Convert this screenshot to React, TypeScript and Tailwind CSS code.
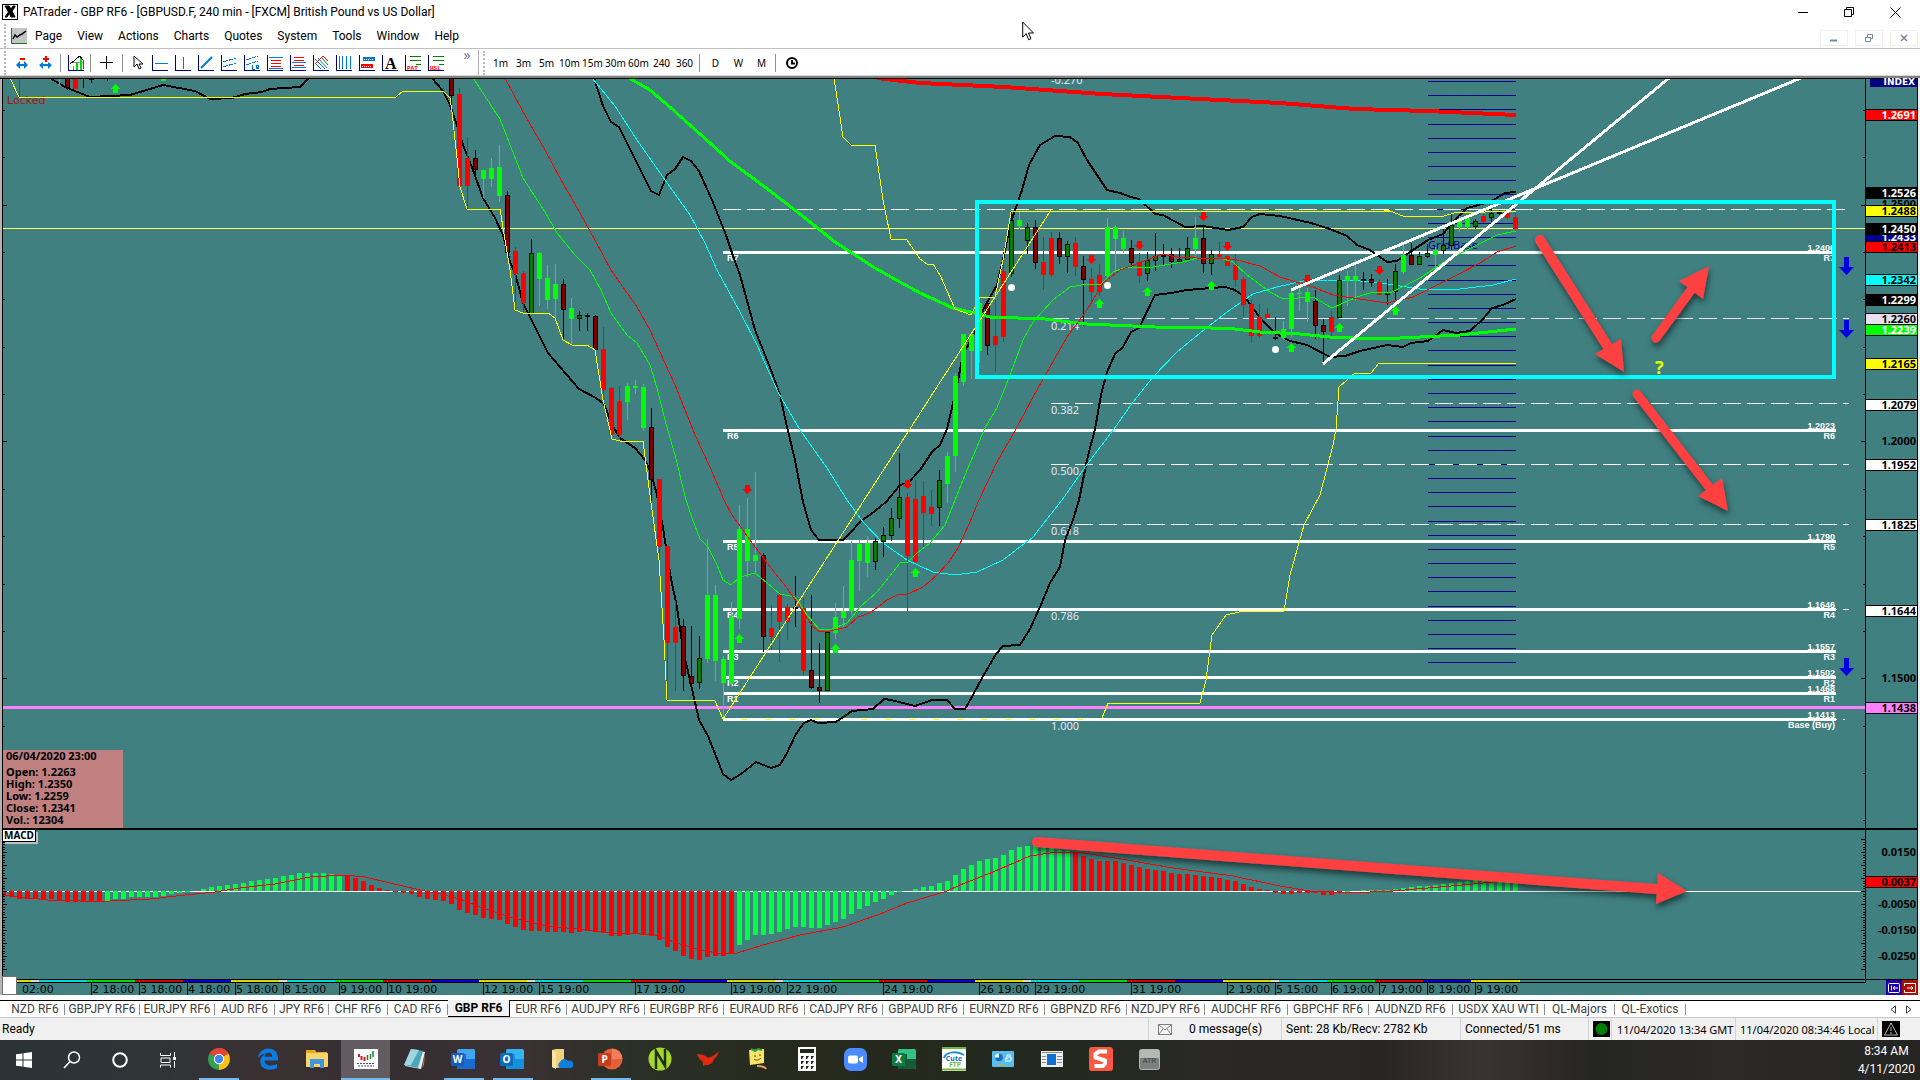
import React from "react";

/* ---------- chart data ---------- */

const PLOT_W = 1866;
const PLOT_TOP = 78;
const PLOT_H = 917;
const barX = (k: number) => 11.5 + 8 * k;

// R / G: bright down and up bars, D / g: dark down and up bars with a black outline
type Candle = [number, number, number, number, number, "R" | "G" | "D" | "g"];

// [bar, high, low, body top, body bottom, kind]
const candles: Candle[] = [
  [1, 78, 97, 78, 79, "R"], [6, 78, 86, 78, 79, "G"], [7, 78, 90, 78, 88, "D"], [8, 78, 89, 78, 89, "R"],
  [9, 78, 88, 78, 79, "D"], [10, 78, 83, 78, 80, "g"], [12, 78, 81, 78, 79, "D"],
  [55, 78, 107, 78, 96, "D"], [56, 88, 186, 94, 186, "R"], [57, 137, 209, 158, 186, "R"], [58, 150, 180, 158, 170, "D"],
  [59, 170, 198, 170, 179, "G"], [60, 158, 187, 168, 179, "G"], [61, 145, 202, 167, 196, "G"], [62, 191, 254, 195, 253, "D"],
  [63, 247, 310, 251, 274, "R"], [64, 271, 312, 273, 303, "R"], [65, 239, 314, 253, 314, "g"], [66, 252, 306, 253, 279, "G"],
  [67, 265, 309, 278, 300, "G"], [68, 264, 318, 284, 299, "G"], [69, 279, 339, 284, 310, "D"], [70, 298, 344, 308, 319, "G"],
  [71, 311, 331, 315, 319, "g"], [72, 313, 331, 315, 317, "D"], [73, 315, 350, 316, 350, "D"], [74, 327, 400, 349, 390, "R"],
  [75, 387, 436, 388, 435, "R"], [76, 386, 439, 401, 435, "R"], [77, 383, 420, 386, 402, "G"], [78, 380, 394, 386, 388, "G"],
  [79, 384, 431, 387, 428, "G"], [80, 408, 501, 427, 480, "D"], [81, 479, 561, 479, 547, "R"], [82, 546, 700, 546, 643, "R"],
  [83, 601, 691, 627, 643, "R"], [84, 619, 691, 626, 676, "D"], [85, 626, 684, 676, 684, "D"], [86, 636, 689, 658, 683, "g"],
  [87, 539, 663, 595, 659, "G"], [88, 585, 681, 595, 661, "G"], [89, 656, 719, 659, 683, "G"], [90, 602, 687, 617, 683, "G"],
  [91, 505, 629, 529, 619, "G"], [92, 498, 577, 529, 561, "G"], [93, 472, 574, 555, 561, "G"], [94, 553, 652, 555, 637, "D"],
  [95, 605, 650, 628, 637, "R"], [96, 592, 662, 595, 622, "R"], [97, 604, 640, 607, 622, "R"], [98, 576, 627, 607, 609, "D"],
  [99, 598, 675, 608, 671, "R"], [100, 595, 689, 670, 688, "D"], [101, 643, 703, 687, 691, "D"], [102, 632, 691, 632, 691, "g"],
  [103, 603, 639, 617, 633, "G"], [104, 586, 628, 611, 618, "G"], [105, 541, 614, 560, 611, "G"], [106, 540, 591, 544, 561, "G"],
  [107, 536, 577, 543, 563, "G"], [108, 538, 570, 541, 562, "g"], [109, 527, 557, 535, 542, "g"], [110, 508, 541, 518, 536, "g"],
  [111, 453, 528, 497, 519, "g"], [112, 493, 611, 497, 556, "R"], [113, 480, 563, 499, 562, "R"], [114, 481, 547, 496, 513, "R"],
  [115, 490, 526, 507, 514, "R"], [116, 470, 526, 480, 508, "g"], [117, 452, 503, 456, 484, "G"], [118, 373, 472, 376, 456, "G"],
  [119, 334, 386, 334, 382, "G"], [120, 334, 379, 334, 351, "G"], [121, 297, 363, 303, 351, "G"], [122, 300, 355, 303, 346, "D"],
  [123, 300, 372, 336, 345, "R"], [124, 260, 342, 271, 337, "R"], [125, 212, 277, 220, 274, "g"], [126, 212, 229, 220, 226, "G"],
  [127, 223, 254, 227, 241, "g"], [128, 220, 269, 227, 263, "D"], [129, 237, 290, 262, 275, "R"], [130, 232, 277, 238, 275, "R"],
  [131, 232, 264, 238, 257, "D"], [132, 241, 273, 244, 257, "g"], [133, 237, 276, 243, 267, "R"], [134, 256, 326, 266, 280, "D"],
  [135, 268, 304, 279, 292, "R"], [136, 264, 296, 275, 292, "R"], [137, 218, 277, 227, 276, "G"], [138, 225, 271, 227, 239, "G"],
  [139, 231, 253, 238, 249, "G"], [140, 240, 268, 248, 263, "D"], [141, 253, 283, 262, 276, "R"], [142, 252, 281, 260, 274, "g"],
  [143, 233, 271, 256, 261, "g"], [144, 244, 266, 255, 257, "D"], [145, 248, 268, 254, 262, "D"], [146, 248, 263, 259, 262, "g"],
  [147, 237, 261, 248, 260, "g"], [148, 217, 257, 238, 249, "G"], [149, 227, 273, 238, 264, "D"], [150, 250, 275, 254, 264, "g"],
  [151, 242, 259, 254, 257, "R"], [152, 255, 266, 256, 266, "R"], [153, 254, 287, 265, 280, "R"], [154, 277, 316, 279, 305, "R"],
  [155, 300, 343, 304, 336, "R"], [156, 304, 338, 317, 336, "R"], [157, 308, 318, 314, 318, "R"], [158, 317, 340, 337, 339, "D"],
  [159, 321, 340, 329, 338, "G"], [160, 289, 337, 293, 329, "G"], [161, 288, 311, 293, 294, "G"], [162, 288, 322, 292, 302, "G"],
  [163, 290, 339, 301, 326, "D"], [164, 319, 362, 325, 332, "D"], [165, 311, 337, 317, 332, "R"], [166, 275, 318, 280, 318, "g"],
  [167, 271, 306, 276, 281, "G"], [168, 259, 301, 276, 281, "G"], [169, 272, 290, 279, 281, "D"], [170, 274, 287, 279, 283, "D"],
  [171, 279, 295, 282, 295, "R"], [172, 279, 305, 292, 295, "g"], [173, 264, 300, 271, 292, "g"], [174, 243, 274, 255, 272, "G"],
  [175, 243, 265, 255, 265, "D"], [176, 252, 265, 256, 265, "g"], [177, 244, 258, 253, 257, "g"], [178, 247, 270, 250, 255, "G"],
  [179, 229, 254, 245, 251, "g"], [180, 213, 250, 225, 246, "g"], [181, 216, 232, 221, 227, "G"], [182, 215, 229, 218, 227, "G"],
  [183, 219, 229, 221, 227, "g"], [184, 214, 223, 216, 222, "R"], [185, 209, 222, 213, 218, "g"], [186, 210, 215, 212, 214, "D"],
  [187, 211, 219, 213, 218, "R"], [188, 213, 229, 217, 229, "R"],
];

const macd = [
  -6, -8, -8, -8, -8, -8, -10, -11, -11, -11, -11, -11, -10, -8, -8, -6, -6, -6, -6, -5, -3, -2, -1, 0, 2, 4, 5, 6, 7, 8, 10, 11,
  12, 13, 15, 16, 18, 18, 18, 18, 17, 16, 16, 13, 10, 6, 3, 1, -1, -2, -3, -6, -8, -9, -10, -13, -19, -22, -24, -27, -28, -29,
  -33, -36, -39, -40, -40, -41, -41, -41, -42, -41, -40, -41, -42, -45, -45, -44, -43, -44, -45, -49, -56, -60, -65, -68, -69,
  -66, -65, -65, -62, -54, -49, -44, -44, -43, -41, -38, -36, -36, -37, -37, -34, -31, -28, -23, -18, -15, -11, -8, -4, -1, 0, 2,
  4, 5, 8, 10, 16, 22, 26, 30, 32, 33, 36, 41, 44, 45, 45, 45, 43, 41, 40, 39, 35, 32, 30, 30, 30, 28, 26, 24, 22, 21, 20, 18,
  17, 17, 16, 15, 14, 13, 11, 10, 7, 4, 2, 1, -2, -3, -3, -2, -2, -2, -4, -4, -2, -1, 0, 1, 1, 1, 1, 2, 3, 4, 5, 5, 6, 7, 8, 9,
  10, 11, 11, 10, 9, 9, 8,
];
const macdIsGreen = (k: number) => (k >= 12 && k <= 41) || (k >= 91 && k <= 132) || k >= 167;

const signal =
  "3,895 20,897 48,900 80,901 110,901 150,899 185,895 215,892 240,888 275,884 310,877 345,875 365,877 390,883 420,890 440,894 460,899 480,907 513,918 547,926 587,930 610,933 640,934 655,935 677,943 700,950 723,954 737,953 763,945 800,935 843,927 880,914 907,903 947,891 960,885 993,872 1030,856 1057,852 1077,852 1127,860 1173,868 1233,876 1280,886 1310,891 1347,893 1393,891 1440,887 1463,885 1493,882 1515,880";

const yellowLow =
  "10,78 19,97 396,97 403,91 443,91 450,98 452,112 457,158 460,187 467,209 500,209 505,240 510,270 515,310 523,313 548,313 555,318 563,340 572,345 587,345 595,350 603,400 612,439 620,441 643,441 648,480 652,510 659,560 664,640 667,700 715,701 723,719";
const yellowZig = "723,719 1051,210";
const yellowHigh =
  "834,78 843,137 851,145 875,145 883,200 891,239 907,240 920,259 927,264 933,264 940,275 955,309 971,315 980,297 995,297 1003,260 1011,212 1390,211 1403,216 1444,216 1454,213 1516,211";
const yellowRight =
  "1102,718 1108,703 1200,703 1206,680 1212,635 1226,615 1239,612 1284,611 1290,575 1304,525 1320,495 1333,445 1336,429 1339,387 1355,373 1371,373 1379,363 1516,363";
const blackEarly =
  "50,78 65,87 90,97 130,95 150,89 163,85 195,91 210,99 232,98 245,94 262,92 270,89 300,87 308,79";
const blackLow =
  "432,78 443,91 450,105 457,125 463,145 473,170 483,198 495,218 503,235 510,262 515,273 523,303 531,319 548,353 560,367 579,389 596,398 604,404 612,425 620,438 635,448 645,460 651,473 657,495 663,528 671,579 677,607 683,650 690,680 699,720 708,736 723,774 731,780 741,774 756,762 771,768 780,765 787,753 796,734 804,723 811,720 818,723 836,722 852,711 873,709 884,699 891,700 903,703 915,706 932,700 947,700 955,709 965,709 973,695 982,678 996,654 1003,646 1020,645 1030,629 1040,607 1050,583 1060,567 1065,540 1073,520 1079,500 1087,460 1095,429 1101,395 1107,372 1115,354 1123,347 1131,332 1139,328 1155,295 1171,293 1187,290 1211,288 1225,287 1235,290 1245,297 1260,318 1275,333 1290,341 1307,345 1330,357 1345,356 1360,351 1387,345 1403,347 1411,343 1428,341 1443,330 1456,333 1470,331 1483,319 1492,308 1503,305 1516,299";
const blackHigh =
  "594,78 603,106 611,122 619,127 633,155 651,191 659,195 667,175 675,169 683,157 691,161 699,171 712,200 720,220 726,235 733,256 740,275 755,330 765,355 771,370 780,395 787,427 795,460 803,502 811,530 819,540 843,540 850,533 860,522 875,511 886,502 900,485 908,483 920,470 932,452 940,445 947,429 955,395 963,355 975,332 984,308 997,285 1003,260 1010,225 1015,210 1022,190 1029,165 1040,145 1055,136 1070,137 1078,143 1087,160 1097,175 1107,190 1120,193 1131,197 1139,199 1155,214 1163,215 1185,227 1203,226 1228,230 1243,227 1252,217 1260,214 1280,216 1311,223 1330,229 1347,236 1357,245 1370,250 1387,262 1397,261 1413,250 1428,240 1443,234 1453,222 1467,208 1490,202 1505,193 1516,192";
const limeThick =
  "629,78 650,90 671,108 700,134 731,162 765,187 800,214 835,242 875,268 900,282 920,293 953,308 975,313 990,317 1045,319 1087,324 1155,327 1211,328 1235,329 1260,332 1300,334 1330,337 1380,339 1420,337 1460,335 1516,329";
const redThick = "877,78 920,83 1004,87 1102,94 1200,99 1280,103 1355,109 1428,111 1516,115";
const cyanThin =
  "592,78 615,106 637,140 665,180 690,215 705,243 717,270 740,312 757,345 778,392 800,430 827,468 847,500 863,522 883,543 907,560 933,572 955,575 977,572 1003,560 1033,537 1062,500 1088,463 1114,429 1133,402 1153,377 1177,352 1200,333 1227,312 1253,294 1277,287 1303,281 1327,280 1360,281 1380,283 1420,289 1460,289 1493,285 1516,279";
const limeThin =
  "473,78 500,119 523,178 545,212 557,233 575,255 590,270 601,290 611,313 627,335 637,343 650,365 657,388 665,420 675,455 686,500 692,518 700,539 708,547 717,565 723,580 731,585 740,577 755,573 767,583 780,594 795,597 807,615 819,629 832,629 847,623 860,607 877,592 893,572 900,563 908,562 917,553 930,543 945,525 955,500 965,475 985,428 997,408 1010,375 1023,340 1033,322 1053,300 1070,287 1087,284 1100,285 1113,272 1127,267 1153,267 1183,262 1197,258 1220,258 1233,262 1247,275 1270,292 1283,299 1313,297 1332,308 1357,297 1373,292 1390,293 1420,278 1447,260 1473,247 1497,235 1516,231";
const redThin =
  "505,78 522,110 545,150 560,178 580,213 595,240 611,270 637,307 650,330 660,352 675,385 695,435 710,467 724,500 732,515 738,523 750,540 767,563 787,588 800,607 813,627 820,632 830,631 847,627 858,617 870,613 887,600 897,595 908,594 923,587 937,575 948,563 958,548 970,522 979,500 997,462 1016,429 1033,397 1050,367 1067,337 1087,310 1103,283 1120,270 1147,260 1162,254 1177,257 1197,258 1220,258 1237,260 1260,266 1280,277 1293,281 1313,287 1333,295 1353,298 1387,303 1413,297 1433,287 1457,275 1480,263 1497,252 1516,246";

const levels = [
  { y: 252, price: "1.2406", name: "R7" },
  { y: 430, price: "1.2023", name: "R6" },
  { y: 541, price: "1.1790", name: "R5" },
  { y: 609, price: "1.1646", name: "R4" },
  { y: 651, price: "1.1557", name: "R3" },
  { y: 677, price: "1.1502", name: "R2" },
  { y: 693, price: "1.1468", name: "R1" },
  { y: 719, price: "1.1413", name: "Base (Buy)" },
];

const fibs = [
  { y: 79, text: "-0.270" },
  { y: 325, text: "0.214" },
  { y: 409, text: "0.382" },
  { y: 470, text: "0.500" },
  { y: 530, text: "0.618" },
  { y: 615, text: "0.786" },
  { y: 725, text: "1.000" },
];

const dates: [number, string][] = [
  [91, "2 18:00"], [139, "3 18:00"], [187, "4 18:00"], [235, "5 18:00"], [283, "8 15:00"], [339, "9 19:00"], [387, "10 19:00"],
  [483, "12 19:00"], [539, "15 19:00"], [635, "17 19:00"], [731, "19 19:00"], [787, "22 19:00"], [883, "24 19:00"],
  [979, "26 19:00"], [1035, "29 19:00"], [1131, "31 19:00"], [1227, "2 19:00"], [1275, "5 15:00"], [1331, "6 19:00"],
  [1379, "7 19:00"], [1427, "8 19:00"], [1475, "9 19:00"],
];

const week: [number, string][] = [
  [48, "#dcd800"], [8, "#d8d8d8"], [48, "#00d8d8"], [48, "#00d800"], [48, "#d80000"], [48, "#0000d8"],
];
const strip: { x: number; w: number; c: string }[] = [];
for (let x = -17, i = 0; x < 1520; i++) {
  const [w, c] = week[i % week.length];
  const from = Math.max(x, 16);
  const to = Math.min(x + w, 1520);
  if (to > from) strip.push({ x: from, w: to - from, c });
  x += w;
}

const axisLabels: { y: number; text: string; cls: string }[] = [
  { y: 204, text: "1.2500", cls: "border-transparent text-black" },
  { y: 441, text: "1.2000", cls: "border-transparent text-black" },
  { y: 678, text: "1.1500", cls: "border-transparent text-black" },
  { y: 115, text: "1.2691", cls: "border-black bg-[#ff0000] text-white" },
  { y: 193, text: "1.2526", cls: "border-black bg-black text-white" },
  { y: 211, text: "1.2488", cls: "border-black bg-[#ffff00] text-black" },
  { y: 237, text: "1.2433", cls: "border-[#000090] bg-[#000090] text-white" },
  { y: 229, text: "1.2450", cls: "border-black bg-black text-white" },
  { y: 247, text: "1.2413", cls: "border-black bg-[#ff0000] text-black" },
  { y: 280, text: "1.2342", cls: "border-black bg-[#00ffff] text-black" },
  { y: 300, text: "1.2299", cls: "border-black bg-black text-white" },
  { y: 319, text: "1.2260", cls: "border-black bg-[#e6e0f0] text-black" },
  { y: 330, text: "1.2239", cls: "border-black bg-[#00ff00] text-white" },
  { y: 364, text: "1.2165", cls: "border-black bg-[#ffff00] text-black" },
  { y: 405, text: "1.2079", cls: "border-black bg-white text-black" },
  { y: 465, text: "1.1952", cls: "border-black bg-white text-black" },
  { y: 525, text: "1.1825", cls: "border-black bg-white text-black" },
  { y: 611, text: "1.1644", cls: "border-black bg-white text-black" },
  { y: 708, text: "1.1438", cls: "border-black bg-[#ff80ff] text-black" },
  { y: 852, text: "0.0150", cls: "border-transparent text-black" },
  { y: 882, text: "0.0037", cls: "border-black bg-[#ff0000] text-black" },
  { y: 904, text: "-0.0050", cls: "border-transparent text-black" },
  { y: 930, text: "-0.0150", cls: "border-transparent text-black" },
  { y: 956, text: "-0.0250", cls: "border-transparent text-black" },
];

const range = (n: number) => Array.from({ length: n }, (_, i) => i);
const leftPct = (x: number) => `${(x / PLOT_W) * 100}%`;
const topPct = (y: number) => `${((y - PLOT_TOP) / PLOT_H) * 100}%`;

/* ---------- chart parts ---------- */

function Note({ x, y, className, children }: { x: number; y: number; className: string; children: React.ReactNode }) {
  return (
    <span className={`absolute -translate-y-1/2 whitespace-nowrap leading-none ${className}`} style={{ left: leftPct(x), top: topPct(y) }}>
      {children}
    </span>
  );
}

function Layer({ children }: { children: React.ReactNode }) {
  return (
    <svg className="absolute inset-0 h-full w-full" viewBox={`0 ${PLOT_TOP} ${PLOT_W} ${PLOT_H}`} preserveAspectRatio="none" aria-hidden="true">
      {children}
    </svg>
  );
}

function CandleBar({ c }: { c: Candle }) {
  const [k, hi, lo, t, b, kind] = c;
  const x = barX(k);
  const outlined = kind === "D" || kind === "g";
  const color = { R: "#ff0000", G: "#00ff00", D: "#800000", g: "#008000" }[kind];
  return (
    <g shapeRendering="crispEdges">
      <rect x={x - 0.5} y={hi} width={1} height={Math.max(lo - hi, 1)} fill={outlined ? "#000" : color} />
      <rect x={x - 2.5} y={t} width={5} height={b - t} fill={outlined ? "#000" : color} />
      {outlined && b - t > 2 && <rect x={x - 1.5} y={t + 1} width={3} height={b - t - 2} fill={color} />}
    </g>
  );
}

function Marker({ x, y, dir, fill = dir === "up" ? "#00ff00" : "#ff0000" }: { x: number; y: number; dir: "up" | "down"; fill?: string }) {
  const d = dir === "up" ? "M0 0L5 5H2.5V9H-2.5V5H-5Z" : "M-2.5 0H2.5V4H5L0 9L-5 4H-2.5Z";
  return <path d={d} transform={`translate(${x} ${y})`} fill={fill} />;
}

function BigArrow({ x1, y1, x2, y2, head, w = 10 }: { x1: number; y1: number; x2: number; y2: number; head: string; w?: number }) {
  return (
    <g fill="#ff4040" stroke="none" filter="url(#arrowShadow)">
      <line x1={x1} y1={y1} x2={x2} y2={y2} stroke="#ff4040" strokeWidth={w} strokeLinecap="round" />
      <polygon points={head} />
    </g>
  );
}

function Plot() {
  return (
    <div className="relative min-w-0 flex-1 overflow-hidden">
      <Layer>
        <g shapeRendering="crispEdges">
          {range(42).map((i) => (
            <rect key={i} x={1428} y={Math.round(81 + i * 14.18)} width={88} height={1} fill="#000090" />
          ))}
          <g stroke="#ffffff" strokeWidth={1} strokeDasharray="18 6">
            <line x1={723} y1={209.5} x2={1845} y2={209.5} />
            <line x1={1051} y1={318.5} x2={1849} y2={318.5} stroke="#e6e0f0" />
            <line x1={1051} y1={403.5} x2={1849} y2={403.5} />
            <line x1={1051} y1={464.5} x2={1849} y2={464.5} />
            <line x1={1051} y1={524.5} x2={1849} y2={524.5} />
            <line x1={1051} y1={609.5} x2={1849} y2={609.5} />
            <line x1={1051} y1={719.5} x2={1845} y2={719.5} />
          </g>
          {levels.map((l) => (
            <rect key={l.name} x={723} y={l.y - 1} width={1113} height={3} fill="#fff" />
          ))}
          <line x1={741} y1={719.5} x2={1102} y2={719.5} stroke="#ffff00" strokeDasharray="6 18" />
          <rect x={3} y={706} width={1863} height={3} fill="#ff80ff" />
          <rect x={3} y={228} width={1863} height={1} fill="#ffff60" />
        </g>
      </Layer>

      <div className="font-['Liberation_Sans'] text-[9px] font-bold text-white">
        {levels.map((l) => (
          <React.Fragment key={l.name}>
            <Note x={1835} y={l.y - 4} className="-translate-x-full">{l.price}</Note>
            <Note x={1835} y={l.y + 6} className="-translate-x-full">{l.name}</Note>
            {l.name !== "Base (Buy)" && <Note x={727} y={l.y + 6} className="">{l.name}</Note>}
          </React.Fragment>
        ))}
      </div>
      <div className="text-[11px] text-[#e4e4f0]">
        {fibs.map((f) => (
          <Note key={f.text} x={1051} y={f.y} className="">{f.text}</Note>
        ))}
        <Note x={1428} y={244} className="text-[#000090]">Grid Base</Note>
      </div>
      <Note x={7} y={100} className="font-['DejaVu_Sans'] text-[11px] text-[#a81414]">Locked</Note>

      <Layer>
        <defs>
          <filter id="arrowShadow" x="-20%" y="-40%" width="140%" height="190%">
            <feDropShadow dx="1" dy="4" stdDeviation="3" floodColor="#000" floodOpacity="0.55" />
          </filter>
        </defs>
        <g fill="none" strokeWidth={1} shapeRendering="crispEdges">
          <g strokeWidth={2} stroke="#000">
            <polyline points={blackEarly} />
            <polyline points={blackLow} />
            <polyline points={blackHigh} />
          </g>
          <polyline points={cyanThin} stroke="#00ffff" />
          <polyline points={redThick} stroke="#ff0000" strokeWidth={4} />
        </g>
        {candles.map((c) => (
          <CandleBar key={c[0]} c={c} />
        ))}
        <g fill="none" strokeWidth={1} shapeRendering="crispEdges">
          <polyline points={limeThick} stroke="#00ff00" strokeWidth={3} />
          <polyline points={limeThin} stroke="#00ff00" />
          <polyline points={redThin} stroke="#ff0000" />
          <g stroke="#ffff00">
            <polyline points={yellowLow} />
            <polyline points={yellowZig} />
            <polyline points={yellowHigh} />
            <polyline points={yellowRight} />
          </g>
        </g>
        {[[115.5, 84], [739.5, 634], [835.5, 644], [915.5, 568], [1099.5, 299], [1147.5, 287], [1211.5, 281], [1291.5, 343], [1339.5, 323], [1395.5, 306]].map(
          ([x, y]) => (
            <Marker key={x} x={x} y={y} dir="up" />
          ),
        )}
        {[[747.5, 485], [907.5, 480], [1091.5, 255], [1139.5, 241], [1203.5, 212], [1227.5, 242], [1307.5, 275], [1379.5, 266]].map(([x, y]) => (
          <Marker key={x} x={x} y={y} dir="down" />
        ))}
        <rect x={161} y={78} width={5} height={3} fill="#00ff00" />
        <g fill="#fff">
          <circle cx={1011.5} cy={287.5} r={3.5} />
          <circle cx={1107.5} cy={285.5} r={3.5} />
          <circle cx={1275.5} cy={349.5} r={3.5} />
        </g>
        <g stroke="#fff" strokeWidth={3} fill="none" shapeRendering="crispEdges">
          <line x1={1291} y1={290} x2={1801} y2={78} />
          <line x1={1323} y1={364} x2={1669} y2={78} />
          <rect x={977} y={202} width={857} height={175} stroke="#00ffff" strokeWidth={4} />
        </g>
        {[257, 320, 658].map((y) => (
          <path key={y} d={`M1844 ${y}h5v10h5l-7.500 8l-7.500 -8h5z`} fill="#0000e0" />
        ))}

        {/* MACD pane */}
        <g shapeRendering="crispEdges">
          <rect x={3} y={891} width={1862} height={1} fill="#fff" />
          <rect x={3} y={891} width={3} height={4} fill="#ff0000" />
          {macd.map((v, k) =>
            v === 0 ? null : (
              <rect key={k} x={barX(k) - 2.5} y={v > 0 ? 891 - v : 891} width={5} height={Math.abs(v)} fill={macdIsGreen(k) ? "#00ff40" : "#ff0000"} />
            ),
          )}
          <polyline points={signal} fill="none" stroke="#ff0000" />
          {/* frame, ticks and week strip */}
          <rect x={0} y={78} width={2} height={917} fill="#b4b4b4" />
          <rect x={2} y={78} width={1} height={917} fill="#000" />
          <rect x={0} y={78} width={1866} height={1} fill="#000" />
          <rect x={2} y={828} width={1864} height={2} fill="#000" />
          <rect x={2} y={979} width={1864} height={1} fill="#000" />
          {strip.map((s) => (
            <rect key={s.x} x={s.x} y={980} width={s.w} height={2} fill={s.c} />
          ))}
          <rect x={2} y={982} width={1864} height={1} fill="#000" />
          <rect x={1865} y={78} width={1} height={905} fill="#000" />
          {range(16).map((i) => {
            const y = Math.round(110 + i * 47.35);
            const w = i % 5 === 2 ? 4 : 2;
            return (
              <g key={i}>
                <rect x={3} y={y} width={w} height={1} />
                <rect x={1865 - w} y={y} width={w} height={1} />
              </g>
            );
          })}
          {range(51).map((i) => {
            const y = Math.round(839 + i * 2.6);
            const w = i % 5 === 0 ? 4 : 2;
            return (
              <g key={i}>
                <rect x={3} y={y} width={w} height={1} />
                <rect x={1865 - w} y={y} width={w} height={1} />
              </g>
            );
          })}
          {dates.map(([x]) => (
            <rect key={x} x={x} y={983} width={1} height={12} />
          ))}
          <rect x={2} y={976} width={15} height={19} fill="#707070" />
          <rect x={3} y={977} width={13} height={17} fill="#fff" />
        </g>

        <BigArrow x1={1540} y1={240} x2={1608} y2={347} head="1624,372 1595,354 1621,339" />
        <BigArrow x1={1656} y1={338} x2={1691} y2={290} head="1709,266 1679,281 1703,299" w={9} />
        <BigArrow x1={1637} y1={394} x2={1709} y2={487} head="1728,511 1698,496 1722,478" w={9} />
        <BigArrow x1={1037} y1={842} x2={1656} y2={889} head="1687,891 1658,873 1656,904" />
      </Layer>

      <Note x={1655} y={367} className="text-[18px] font-bold text-[#e0ff00]">?</Note>
      <Note x={22} y={989} className="font-['DejaVu_Sans'] text-[11px]">02:00</Note>
      {dates.map(([x, t]) => (
        <Note key={x} x={x + 1} y={989} className="font-['DejaVu_Sans'] text-[11px]">{t}</Note>
      ))}

      <dl className="absolute left-[3px] h-[78px] w-[120px] bg-[#c08080] pl-[3px] text-[11px] font-bold leading-3" style={{ top: topPct(750) }}>
        <dt className="pb-1">06/04/2020 23:00</dt>
        <dd>Open: 1.2263</dd>
        <dd>High: 1.2350</dd>
        <dd>Low: 1.2259</dd>
        <dd>Close: 1.2341</dd>
        <dd>Vol.: 12304</dd>
      </dl>
      <span
        className="absolute left-[3px] border-r border-b border-black bg-white px-px text-[10px] font-bold leading-[11px] shadow-[2px_2px_0_#c0c0c0]"
        style={{ top: topPct(830) }}
      >
        MACD
      </span>
    </div>
  );
}

function PriceAxis() {
  return (
    <div className="relative w-[54px] text-[11px] font-bold">
      <div className="absolute inset-x-0 top-0 h-px bg-black" />
      <div className="absolute inset-y-0 right-0 w-[2px] bg-[#f0f0f0]" />
      <div className="absolute top-0 right-[2px] bottom-4 w-px bg-black" />
      <div className="absolute inset-x-0 mr-[2px] h-[2px] bg-black" style={{ top: topPct(828) }} />
      <div className="absolute inset-x-0 mr-[2px] h-px bg-black" style={{ top: topPct(979) }} />
      <span className="absolute top-px right-[3px] h-2 w-[47px] bg-[#000080] pr-[2px] text-right font-['DejaVu_Sans'] text-[9px] leading-[7px] text-white">INDEX</span>
      {axisLabels.map((l) => (
        <span
          key={l.text}
          className={`absolute right-[3px] left-0 h-3 -translate-y-1/2 border-y pr-px text-right leading-[10px] ${l.cls}`}
          style={{ top: topPct(l.y) }}
        >
          {l.text}
        </span>
      ))}
      <div className="absolute right-[2px] bottom-0 flex">
        <button aria-label="Compress" className="flex h-[15px] w-4 items-center justify-center bg-[#2000a8]">
          <svg width="12" height="10" viewBox="0 0 12 10" fill="none" stroke="#fff"><rect x=".5" y=".5" width="11" height="9" rx="1" /><path d="M3.500 2.500v5M10 5H5.500M7 3L5 5l2 2" /></svg>
        </button>
        <button aria-label="Expand" className="flex h-[15px] w-4 items-center justify-center bg-[#a81000]">
          <svg width="12" height="10" viewBox="0 0 12 10" fill="none" stroke="#fff"><path d="M.5 3V.5h11v9H.5V7M3 5h6M7 3l2 2-2 2" /></svg>
        </button>
      </div>
    </div>
  );
}

/* ---------- toolbar ---------- */

function ToolIcon({ children, frame = true }: { children?: React.ReactNode; frame?: boolean }) {
  return (
    <svg width="17" height="16" viewBox="0 0 17 16" fill="none" shapeRendering="crispEdges">
      {frame && <path d="M.5 0v15.500H16" stroke="#000080" />}
      {children}
    </svg>
  );
}

const B = "#0078d8";
const drawTools: [string, React.ReactNode][] = [
  ["Horizontal line", <path key="a" d="M3 8.500h13" stroke={B} />],
  ["Vertical line", <path key="a" d="M8.500 2v12" stroke={B} />],
  ["Trend line", <path key="a" d="M3 13L14 2" stroke={B} strokeWidth="2" shapeRendering="auto" />],
  ["Channel", <path key="a" d="M2 7l13-4M2 12l13-4" stroke={B} strokeDasharray="5 1" />],
  ["Linear regression", <g key="a"><path d="M2 5l12-4M2 10l12-4" stroke={B} strokeDasharray="5 1" /><path d="M8.500 10v4h2.500M12.500 14V10.500h2v2h-2l3 2" stroke={B} /></g>],
  ["Retracement", <g key="a"><path d="M2 2.500h14M2 13.500h14" stroke={B} /><path d="M4 5.500h10M4 8.500h10M4 11.500h10" stroke="red" /></g>],
  ["Extension", <g key="a"><path d="M2 7.500h14M2 12.500h14" stroke={B} /><path d="M4 2.500h10M4 5.500h10M4 10.500h10" stroke="red" /></g>],
  ["Pitchfork", <g key="a" shapeRendering="auto"><path d="M2 4l10 10M5 3l9 10M2 8l6 6" stroke={B} /><path d="M2 9l8-8 5 5" stroke="red" /><path d="M9 3l6 7" stroke="green" /></g>],
  ["Time zones", <path key="a" d="M3.500 1v13M6.500 1v13M10.500 1v13M14.500 1v13" stroke={B} />],
  ["Ranges", <g key="a"><rect x="4" y="2" width="12" height="4" fill={B} /><path d="M5 4.500h10" stroke="#fff" strokeDasharray="1 1" /><rect x="2" y="9" width="12" height="4" fill="red" /><path d="M3 11.500h10" stroke="#fff" strokeDasharray="1 1" /></g>],
  ["Text", <text key="a" x="3" y="14" fontSize="16" fontWeight="bold" fontFamily="Liberation Serif" fill="#000">A</text>],
  ["PAT levels", <g key="a"><path d="M5 1.500h11M5 5.500h11M11 9.500h5" stroke="green" /><text x="2" y="15" fontSize="6" fontWeight="bold" fontFamily="Liberation Mono" fill="red">PAT</text></g>],
  ["HSL levels", <g key="a"><path d="M5 1.500h11M5 5.500h11M11 9.500h5" stroke="green" /><text x="2" y="15" fontSize="6" fontWeight="bold" fontFamily="Liberation Mono" fill="red">HSL</text></g>],
];

const frames = ["1m", "3m", "5m", "10m", "15m", "30m", "60m", "240", "360"];

const Sep = () => <span className="h-[18px] w-px bg-[#909090]" />;
const Grip = () => <span className="ml-1 h-6 w-0 border-l-2 border-dotted border-[#b8b8b8]" />;

function Toolbar() {
  return (
    <div className="flex h-[27px] items-center border-t border-[#c0c0c0] pt-px" role="toolbar" aria-label="Chart tools">
      <Grip />
      <button aria-label="Decrease spacing" className="ml-[8px] w-[23px] pl-px">
        <svg width="15" height="16" viewBox="0 0 15 16"><path d="M5 3h5v2H5z" fill="red" /><path d="M1 10l4-4v3h4V6l4 4-4 4v-3H5v3z" fill={B} /></svg>
      </button>
      <button aria-label="Increase spacing" className="w-[23px] pl-px">
        <svg width="15" height="16" viewBox="0 0 15 16"><path d="M5 3h2V1h2v2h2v2H9v2H7V5H5z" fill="red" /><path d="M1 10l4-3v2h5V7l4 3-4 4v-3H5v3z" fill={B} /></svg>
      </button>
      <Sep />
      <button aria-label="Indicators" className="ml-[7px] w-[22px]">
        <ToolIcon><path d="M2 7.500h13" stroke="#909090" /><path d="M8 8h2v7H8zM5 11h1v4H5zM12 3h2v12h-2z" fill="#00e000" /><path d="M2 9l4-3 3-3 3-2 3 4 1 5" stroke="#000" /><path d="M15.500 5v9" stroke="red" /></ToolIcon>
      </button>
      <Sep />
      <button aria-label="Crosshair" className="ml-[9px] w-[22px]">
        <ToolIcon frame={false}><path d="M6.500 1v13M0 7.500h13" stroke="#000" /></ToolIcon>
      </button>
      <Sep />
      <button aria-label="Pointer" className="ml-[10px] w-[19px]">
        <svg width="11" height="16" viewBox="0 0 11 16"><path d="M1 1v11l3-3 2 5 2-1-2-4h4z" fill="#fff" stroke="#000" /></svg>
      </button>
      {drawTools.map(([label, art]) => (
        <button key={label} aria-label={label} className="w-[23px]">
          <ToolIcon>{art}</ToolIcon>
        </button>
      ))}
      <button aria-label="More" className="ml-2 -mt-4 w-4 text-[14px] leading-3 text-[#7070b0]">»</button>
      <span className="ml-[3px] h-[25px] w-px bg-[#b0b0b0]" />
      <Grip />
      <div className="ml-1 mr-[3px] flex pt-px text-[10px]">
        {frames.map((f) => (
          <button key={f} className="w-[23px] text-center">{f}</button>
        ))}
      </div>
      <Sep />
      <div className="ml-1 mr-[2px] flex pt-px text-[10px]">
        <button className="w-[23px]">D</button>
        <button className="w-[23px]">W</button>
        <button className="w-[23px]">M</button>
      </div>
      <Sep />
      <button aria-label="Session clock" className="ml-2">
        <svg width="16" height="14" viewBox="0 0 16 14" fill="none" stroke="#000" strokeWidth="2"><circle cx="8" cy="7" r="5" /><path d="M8 4v3.500h3" /></svg>
      </button>
    </div>
  );
}

/* ---------- tabs ---------- */

const tabs: [string, number][] = [
  ["NZD RF6", 65], ["GBPJPY RF6", 75], ["EURJPY RF6", 75], ["AUD RF6", 60], ["JPY RF6", 54], ["CHF RF6", 59], ["CAD RF6", 60],
  ["GBP RF6", 62], ["EUR RF6", 57], ["AUDJPY RF6", 78], ["EURGBP RF6", 79], ["EURAUD RF6", 81], ["CADJPY RF6", 78],
  ["GBPAUD RF6", 81], ["EURNZD RF6", 81], ["GBPNZD RF6", 82], ["NZDJPY RF6", 78], ["AUDCHF RF6", 83], ["GBPCHF RF6", 81],
  ["AUDNZD RF6", 84], ["USDX XAU WTI", 92], ["QL-Majors", 70], ["QL-Exotics", 71],
];

function Tabs() {
  return (
    <div className="flex h-[23px] border-b border-[#c8c8c8] bg-white pt-[5px] font-['Roboto'] text-[12px] text-[#404040]">
      <div className="flex min-w-0 flex-1 overflow-hidden" role="tablist">
        {tabs.map(([t, w], i) => {
          const active = t === "GBP RF6";
          return active ? (
            <button key={t} role="tab" aria-selected="true" className="shrink-0 border-r border-b border-black bg-[#f2f2f2] text-center font-bold leading-[15px] whitespace-nowrap text-black" style={{ width: w }}>
              {t}
            </button>
          ) : (
            <button key={t} role="tab" aria-selected="false" className={`flex shrink-0 items-center justify-end border-t border-black leading-[15px] whitespace-nowrap ${i === 0 ? "pl-[6px]" : ""}`} style={{ width: w }}>
              <span className="flex-1 text-center">{t}</span>
              <span className="h-[11px] w-px bg-[#909090]" />
            </button>
          );
        })}
        <div className="flex-1 border-t border-black" />
      </div>
      <div className="flex items-center gap-2 border-t border-black pr-2">
        <button aria-label="Previous tabs"><svg width="7" height="9" viewBox="0 0 7 9" fill="#fff" stroke="#404040"><path d="M5.500 .8v7.400L1 4.500z" /></svg></button>
        <button aria-label="Next tabs"><svg width="7" height="9" viewBox="0 0 7 9" fill="#fff" stroke="#404040"><path d="M1.500 .8v7.400L6 4.500z" /></svg></button>
      </div>
    </div>
  );
}

function StatusBar() {
  return (
    <footer className="flex h-[22px] items-center bg-[#f0f0f0] font-['Roboto'] text-[12px] leading-none whitespace-nowrap text-black">
      <span className="flex-1 pl-[2px]">Ready</span>
      <div className="flex h-full w-[133px] items-center border-l border-[#d4d4d4] pl-[9px]">
        <svg width="14" height="11" viewBox="0 0 14 11" fill="#f4f4f4" stroke="#808080"><rect x=".5" y=".5" width="13" height="10" /><path d="M1 1l6 5 6-5M1 10l4-5M13 10L9 5" fill="none" /></svg>
        <span className="ml-[17px]">0 message(s)</span>
      </div>
      <span className="flex h-full w-[179px] items-center border-l border-[#d4d4d4] pl-1">Sent: 28 Kb/Recv: 2782 Kb</span>
      <span className="flex h-full w-32 items-center border-l border-[#d4d4d4] pl-1">Connected/51 ms</span>
      <span className="flex h-full w-[23px] items-center border-l border-[#d4d4d4] pl-1">
        <svg width="17" height="16" viewBox="0 0 17 16"><rect width="17" height="16" fill="#000" /><circle cx="8.500" cy="8" r="6" fill="#008000" /></svg>
      </span>
      <span className="flex h-full w-[124px] items-center border-l border-[#d4d4d4] pl-[5px] font-['Noto_Sans'] text-[11px]">11/04/2020 13:34 GMT</span>
      <span className="flex h-full w-[142px] items-center border-l border-[#d4d4d4] pl-1 font-['Noto_Sans'] text-[11px]">11/04/2020 08:34:46 Local</span>
      <span className="flex h-full w-[43px] items-center border-l border-[#d4d4d4] pl-1">
        <svg width="18" height="16" viewBox="0 0 18 16"><rect width="18" height="16" fill="#000" /><path d="M9 2l6.500 12h-13zM9 6v4M9 11v2" fill="none" stroke="#b8b8b8" /></svg>
      </span>
    </footer>
  );
}

/* ---------- taskbar ---------- */

const Office = ({ dark, mid, light, letter, round }: { dark: string; mid: string; light: string; letter: string; round?: boolean }) => (
  <svg width="25" height="24" viewBox="0 0 25 24">
    {round ? <circle cx="14" cy="12" r="10.500" fill={light} /> : <rect x="6" y="2" width="18" height="20" rx="1.500" fill={light} />}
    {round ? <path d="M14 12V1.500A10.500 10.500 0 0 1 24.500 12z" fill={mid} opacity=".6" /> : <path d="M6 12h18v8.500a1.500 1.500 0 0 1-1.500 1.500h-15A1.500 1.500 0 0 1 6 20.500zM6 7h9v5H6z" fill={mid} />}
    <rect x="0" y="6" width="13" height="13" rx="1.500" fill={dark} />
    <text x="6.500" y="16" textAnchor="middle" fontSize="10" fontWeight="bold" fontFamily="Noto Sans" fill="#fff">{letter}</text>
  </svg>
);

const apps: { label: string; line?: boolean; active?: boolean; icon: React.ReactNode }[] = [
  {
    label: "Google Chrome", line: true,
    icon: (
      <svg width="22" height="22" viewBox="0 0 22 22">
        <path d="M11 11L1.500 5.500A11 11 0 0 1 20.500 5.500z" fill="#e84435" />
        <path d="M11 11V0A11 11 0 0 1 20.500 5.500H11z" fill="#e84435" />
        <path d="M11 11l9.500-5.500A11 11 0 0 1 11 22z" fill="#fbc116" />
        <path d="M11 11v11A11 11 0 0 1 1.500 5.500z" fill="#34a350" />
        <path d="M11 11l4.800 2.500L11 22z" fill="#fbc116" />
        <circle cx="11" cy="11" r="5.200" fill="#fff" /><circle cx="11" cy="11" r="4.200" fill="#4486f4" />
      </svg>
    ),
  },
  {
    label: "Edge",
    icon: <svg width="22" height="22" viewBox="0 0 22 22"><path d="M1 10C2 3 6.500 .5 11.500 .5c6 0 9.500 4 9.500 9.500v2.500H7.500c.2 3.500 3 5 6 5 2.400 0 4.500-.6 6.500-1.700V20c-2 1.200-4.600 1.700-7.300 1.700C6.500 21.700 3.300 18 3.300 13.700c0-3.700 2-6.700 5.500-8.200C5.500 6 2.500 7.800 1 10zm6.600-1.300h7.600c0-2.700-1.200-4-3.600-4s-3.700 1.700-4 4z" fill="#0a7be0" /></svg>,
  },
  {
    label: "File Explorer",
    icon: <svg width="22" height="20" viewBox="0 0 22 20"><path d="M0 1h9l1.500 2H21v5H0z" fill="#e8a820" /><rect y="4" width="22" height="14" rx="1" fill="#fbd56b" /><path d="M4 10h14v9h-4v-4H8v4H4z" fill="#3f96dc" /></svg>,
  },
  {
    label: "PATrader", line: true, active: true,
    icon: <svg width="24" height="20" viewBox="0 0 24 20"><rect width="24" height="20" fill="#fff" /><path d="M5 5v3M7.500 7v4M10.500 8v4" stroke="#d01818" strokeWidth="2" /><path d="M13.500 6v5M16.500 5v5M19 2v6" stroke="#208030" strokeWidth="1.500" /><path d="M3 14.500h18M4 17h16" stroke="#555" strokeDasharray="2 1" /></svg>,
  },
  {
    label: "Notepad",
    icon: <svg width="23" height="22" viewBox="0 0 23 22"><path d="M8 2l14 2-4 17-16-3z" fill="#e4eef0" /><path d="M8 1l12 2-5 17-14-3z" fill="#4fa3bb" /><path d="M8 1l8 1-8 15-7 0z" fill="#9ed6e2" /><path d="M22 5l-3 15 2-3z" fill="#b08030" /></svg>,
  },
  { label: "Word", line: true, icon: <Office dark="#185abd" mid="#1b6ad0" light="#41a5ee" letter="W" /> },
  { label: "Outlook", line: true, icon: <Office dark="#0f6cbd" mid="#1490df" light="#35b4f2" letter="O" /> },
  {
    label: "OneDrive folder",
    icon: <svg width="22" height="22" viewBox="0 0 22 22"><path d="M1 2l4-1h8v18l-8 1-4-1z" fill="#f0d080" /><path d="M1 2l4 3v16l-4-2z" fill="#fbe4a0" /><path d="M9 20a3.500 3.500 0 0 1 0-6 4.500 4.500 0 0 1 8-1 3.500 3.500 0 0 1 3 7z" fill="#0f80dc" /></svg>,
  },
  { label: "PowerPoint", line: true, icon: <Office dark="#c43e1c" mid="#ff9070" light="#e4603c" letter="P" round /> },
  {
    label: "NinjaTrader",
    icon: <svg width="24" height="24" viewBox="0 0 24 24"><circle cx="12" cy="12" r="11.500" fill="#a6d72c" /><path d="M8 22V4l9 15V2" fill="none" stroke="#203018" strokeWidth="2.500" /></svg>,
  },
  {
    label: "Trading bird",
    icon: <svg width="23" height="16" viewBox="0 0 23 16"><path d="M0 3c4 0 8 1 11 4 3-1 7-3 11-7-1 3-2 6-5 8-1 4-4 6-8 6l-3 1c0-2 0-4-1-5C3 9 1 6 0 3z" fill="#e02a10" /></svg>,
  },
  {
    label: "Sticky notes",
    icon: <svg width="20" height="22" viewBox="0 0 20 22"><path d="M1 2l15-1v14L2 17z" fill="#f8e468" /><path d="M3 1l4 2 3-2 4 1" stroke="#30a040" strokeWidth="2" fill="none" /><path d="M7 7v2M12 6v2M6 11c2 2 5 1 7-1" stroke="#604010" fill="none" /><path d="M9 18c4 0 8 0 9 3" stroke="#e8a060" strokeWidth="2" fill="none" /></svg>,
  },
  {
    label: "Calculator",
    icon: <svg width="18" height="24" viewBox="0 0 18 24"><rect width="18" height="24" fill="#fff" /><rect x="2" y="2" width="14" height="4" fill="#20281c" />{[9, 14, 19].map((y) => [3, 8, 13].map((x) => <path key={`${x}-${y}`} d={`M${x} ${y}h3l-2 3h-1z`} fill="#20281c" />))}</svg>,
  },
  {
    label: "Zoom",
    icon: <svg width="23" height="23" viewBox="0 0 23 23"><rect width="23" height="23" rx="7" fill="#4a8cff" /><rect x="4" y="7.500" width="10" height="8" rx="2" fill="#fff" /><path d="M15 10.500l4-2.500v7l-4-2.500z" fill="#fff" /></svg>,
  },
  { label: "Excel", icon: <Office dark="#107c41" mid="#185c37" light="#33c481" letter="X" /> },
  {
    label: "CuteFTP",
    icon: <svg width="24" height="24" viewBox="0 0 24 24"><rect width="24" height="24" fill="#fff" /><path d="M0 1h24M0 22.500h24" stroke="#70b840" strokeWidth="2" /><path d="M2 11c2-7 14-7 20-3" stroke="#2090d0" strokeWidth="2" fill="none" /><text x="12" y="14" textAnchor="middle" fontSize="7" fontWeight="bold" fontFamily="Noto Sans" fill="#1870b0">Cute</text><text x="13" y="20" textAnchor="middle" fontSize="7" fontWeight="bold" fontFamily="Noto Sans" fill="#70b840">FTP</text></svg>,
  },
  {
    label: "Control Panel",
    icon: <svg width="22" height="16" viewBox="0 0 22 16"><rect width="22" height="16" rx="1" fill="#58bdf0" /><circle cx="7" cy="6.500" r="4" fill="#fff" /><path d="M7 6.500v-4a4 4 0 1 1-4 4z" fill="#1470c0" /><path d="M13 8h2V4h4M13 10h6V6h-3" stroke="#fff" fill="none" /><path d="M5 13.500h8" stroke="#f8a020" /></svg>,
  },
  {
    label: "Task window",
    icon: <svg width="22" height="16" viewBox="0 0 22 16"><rect width="22" height="16" fill="#f0f0f0" /><rect x="6" y="3" width="9" height="11" fill="#1070d8" /><path d="M1 1.500h20M1 5.500h4M1 8.500h4M1 11.500h4M16 5.500h5M16 8.500h5M16 11.500h5" stroke="#808890" /></svg>,
  },
  {
    label: "Snagit",
    icon: <svg width="24" height="24" viewBox="0 0 24 24"><rect width="24" height="24" rx="3" fill="#fa5843" /><path d="M18 4.500H10L6.500 7v3.500l9.500 3v3l-2 2.500H5.500" fill="none" stroke="#fff" strokeWidth="4" strokeLinejoin="round" /></svg>,
  },
  {
    label: "ATR",
    icon: <svg width="21" height="21" viewBox="0 0 21 21"><rect x=".5" y=".5" width="20" height="20" rx="2" fill="#7c8280" stroke="#b0b4b4" /><rect x="1" y="1" width="19" height="8" fill="#b4b8b6" /><text x="10.500" y="13.500" textAnchor="middle" fontSize="7" fontWeight="bold" fontFamily="Liberation Sans" fill="#4c5250">ATR</text></svg>,
  },
];

function Taskbar() {
  return (
    <nav
      aria-label="Taskbar"
      className="flex h-10 bg-[linear-gradient(90deg,#2b3235_0%,#2f3437_8%,#3a3032_14%,#352f32_20%,#3a3134_27%,#2b3027_33%,#26291c_42%,#23291f_55%,#2a2926_63%,#272623_72%,#3c3233_77%,#252521_83%,#2b2a28_90%,#242422_100%)]"
    >
      <button aria-label="Start" className="flex w-12 items-center justify-center">
        <svg width="16" height="16" viewBox="0 0 16 16" fill="#fff"><path d="M0 2.300L6.500 1.400V7.500H0zM7.500 1.200L16 0v7.500H7.500zM0 8.500h6.500v6.100L0 13.700zM7.500 8.500H16V16l-8.500-1.200z" /></svg>
      </button>
      <button aria-label="Search" className="flex w-12 items-center justify-center">
        <svg width="18" height="18" viewBox="0 0 18 18" fill="none" stroke="#fff" strokeWidth="1.500"><circle cx="11" cy="6.500" r="5.500" /><path d="M7 10.500L1 17" /></svg>
      </button>
      <button aria-label="Cortana" className="flex w-12 items-center justify-center">
        <svg width="16" height="16" viewBox="0 0 16 16" fill="none" stroke="#fff" strokeWidth="2"><circle cx="8" cy="8" r="6.800" /></svg>
      </button>
      <button aria-label="Task view" className="flex w-12 items-center justify-center">
        <svg width="17" height="16" viewBox="0 0 17 16" fill="none" stroke="#fff"><path d="M.5 1v2.500h10V1M1 6h9v4.500H1zM.5 15.500V13h10v2.500M14.500 0v5M14.500 9v7" /><rect x="13.500" y="5.500" width="2" height="2" fill="#fff" /></svg>
      </button>
      <div className="ml-[2px] flex">
        {apps.map((a) => (
          <button key={a.label} aria-label={a.label} className={`flex w-[49px] flex-col items-center ${a.active ? "bg-[#625b60]" : ""}`}>
            <span className="flex flex-1 items-center">{a.icon}</span>
            <span className={`h-[2px] ${a.active ? "w-full" : "w-10"} ${a.line ? "bg-[#76b9ed]" : ""}`} />
          </button>
        ))}
      </div>
      <div className="ml-auto mr-[5px] pt-[2px] text-center font-['Roboto'] text-[12px] leading-[18px] text-white">
        <div>8:34 AM</div>
        <div>4/11/2020</div>
      </div>
    </nav>
  );
}

/* ---------- window ---------- */

const menus = ["Page", "View", "Actions", "Charts", "Quotes", "System", "Tools", "Window", "Help"];

export default function App() {
  return (
    <div className="relative flex min-h-screen flex-col overflow-hidden bg-white font-['Noto_Sans',sans-serif] text-black">
      <header className="flex h-6 items-center font-['Roboto'] text-[12px]">
        <svg className="ml-[2px] mr-[5px]" width="16" height="16" viewBox="0 0 16 16"><rect width="16" height="16" fill="#000" /><rect x="1" y="1" width="14" height="14" fill="#fff" /><path d="M3 2h4l2 3 2-3h2v1l-3 4 3 6H9L7.500 9.500 5 13H3l3.500-5z" fill="#000" stroke="#000" /></svg>
        <h1 className="flex-1 whitespace-nowrap">PATrader - GBP RF6 - [GBPUSD.F, 240 min - [FXCM] British Pound vs US Dollar]</h1>
        <div className="mr-[2px] flex">
          <button aria-label="Minimize" className="flex w-[46px] items-center justify-center"><svg width="10" height="10" stroke="#000"><path d="M0 5.500h10" /></svg></button>
          <button aria-label="Restore" className="flex w-[46px] items-center justify-center"><svg width="10" height="10" viewBox="0 0 10 10" fill="none" stroke="#000"><path d="M.5 2.500h7v7h-7zM2.500 2.500v-2h7v7h-2" /></svg></button>
          <button aria-label="Close" className="flex w-[46px] items-center justify-center"><svg width="11" height="11" viewBox="0 0 11 11" stroke="#000"><path d="M.5 .5l10 10M10.500 .5l-10 10" /></svg></button>
        </div>
      </header>

      <div className="flex h-6 items-center">
        <Grip />
        <svg className="mr-2 ml-[5px]" width="16" height="16" viewBox="0 0 16 16"><rect width="16" height="16" fill="#c4c4c4" /><path d="M.5 0v15.500H16" stroke="#207020" fill="none" /><path d="M2 11l2-4 2 2 3-2 2-1 4-3" stroke="#000" strokeWidth="1.500" fill="none" /></svg>
        <nav aria-label="Menu" className="flex flex-1 gap-[15px] font-['Roboto'] text-[12px]">
          {menus.map((m) => (
            <button key={m}>{m}</button>
          ))}
        </nav>
        <div className="mr-[2px] flex gap-[7px] pt-1 text-[#7088a0]">
          <button aria-label="Minimize chart" className="flex h-4 w-7 items-center justify-center border border-[#f0f0f0]"><svg width="8" height="8" stroke="currentColor"><path d="M0 6.500h7" strokeWidth="2" /></svg></button>
          <button aria-label="Restore chart" className="flex h-4 w-7 items-center justify-center border border-[#f0f0f0]"><svg width="8" height="8" viewBox="0 0 8 8" fill="none" stroke="currentColor"><path d="M.5 3.500h5v4h-5zM2.500 3.500v-3h5v4h-2" /></svg></button>
          <button aria-label="Close chart" className="flex h-4 w-7 items-center justify-center border border-[#f0f0f0]"><svg width="8" height="8" viewBox="0 0 8 8" stroke="currentColor" strokeWidth="1.500"><path d="M1 1l6 6M7 1L1 7" /></svg></button>
        </div>
      </div>

      <Toolbar />
      <div className="h-px bg-[#d8d8d8]" />
      <div className="h-[2px] bg-[#808080]" />

      <main className="flex min-h-[600px] flex-1 bg-[#408080]">
        <Plot />
        <PriceAxis />
      </main>

      <Tabs />
      <StatusBar />
      <Taskbar />

      <svg className="absolute top-[21px] left-[1022px]" width="12" height="20" viewBox="0 0 12 20" aria-hidden="true"><path d="M.7 1v15l3.500-3.300 2.500 6 2.300-1-2.500-5.700h5z" fill="#fff" stroke="#000" /></svg>
    </div>
  );
}
